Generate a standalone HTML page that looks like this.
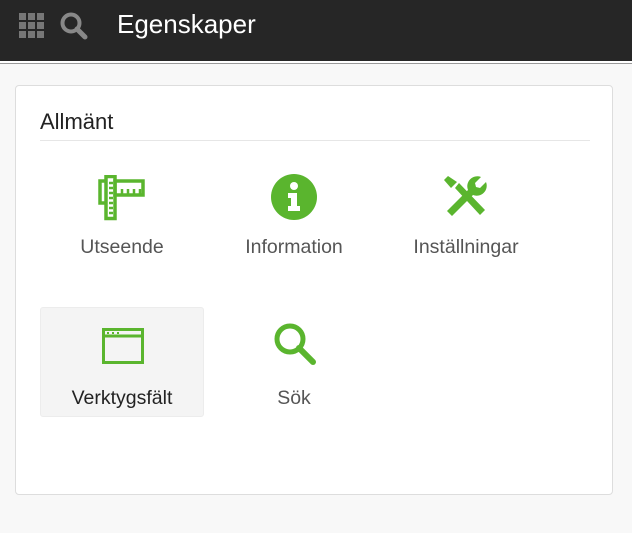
<!DOCTYPE html>
<html><head><meta charset="utf-8"><style>
body{margin:0;width:632px;height:533px;background:#f8f8f8;font-family:"Liberation Sans",sans-serif;position:relative;overflow:hidden}
.hd{position:absolute;left:0;top:0;width:632px;height:61px;background:#262626;border-bottom:2px solid #fff;box-shadow:0 1px 0 #999}
.hd .t{position:absolute;left:117px;top:9px;color:#fff;font-size:26px}
.card{position:absolute;left:15px;top:85px;width:596px;height:408px;background:#fff;border:1px solid #ddd;border-radius:4px}
.h{position:absolute;left:24px;top:23px;font-size:22px;color:#222}
.hr{position:absolute;left:24px;right:22px;top:54px;border-top:1px solid #e6e6e6}
.tile{position:absolute;width:164px;height:108px;border-radius:3px}
.tile .l{position:absolute;left:-10px;right:-10px;top:80px;text-align:center;font-size:19.5px;color:#555}
.tile svg{position:absolute}
</style></head><body>
<div class="hd">
<svg style="position:absolute;left:19px;top:13px" width="25" height="25" viewBox="0 0 25 25" fill="#777">
<rect x="0" y="0" width="7" height="7"/><rect x="9" y="0" width="7" height="7"/><rect x="18" y="0" width="7" height="7"/>
<rect x="0" y="9" width="7" height="7"/><rect x="9" y="9" width="7" height="7"/><rect x="18" y="9" width="7" height="7"/>
<rect x="0" y="18" width="7" height="7"/><rect x="9" y="18" width="7" height="7"/><rect x="18" y="18" width="7" height="7"/></svg>
<svg style="position:absolute;left:59px;top:11px" width="30" height="30" viewBox="0 0 30 30"><circle cx="12" cy="12" r="8.5" stroke="#888" stroke-width="4" fill="none"/><path d="M18 18l8 8" stroke="#888" stroke-width="5" stroke-linecap="round"/></svg>
<div class="t">Egenskaper</div>
</div>
<div class="card">
<div class="h">Allmänt</div><div class="hr"></div>
<div class="tile" style="left:24px;top:70px">
<svg style="left:58px;top:19px" width="48" height="46" viewBox="0 0 48 46" fill="none" stroke="#5ab52e" stroke-width="3.5">
<rect x="8" y="1.5" width="9" height="42"/><path d="M8 6H2v22h6"/><rect x="17" y="6" width="28" height="14"/>
<path d="M11 8h4M11 13h4M11 18h4M11 23h4M11 28h4M11 33h4M11 38h4M24 20v-6M30 20v-6M36 20v-6M42 20v-6" stroke-width="2.5"/></svg>
<div class="l">Utseende</div></div>
<div class="tile" style="left:196px;top:70px">
<svg style="left:58px;top:17px" width="48" height="48" viewBox="0 0 48 48"><circle cx="24" cy="24" r="23" fill="#5ab52e"/><circle cx="24" cy="13" r="4" fill="#fff"/><path d="M18 20h9v13h3v5H18v-5h3v-8h-3z" fill="#fff"/></svg>
<div class="l">Information</div></div>
<div class="tile" style="left:368px;top:70px">
<svg style="left:59px;top:19px" width="46" height="42" viewBox="0 0 46 42" fill="#5ab52e">
<path d="M1 5l4-4 9 6-6 6z"/><path d="M12 13l4-5 26 27-5 5z"/>
<path d="M4 36L25 15a10 10 0 0 1 13-13l-6 6 1 4 4 1 6-6a10 10 0 0 1-13 13L9 41z"/></svg>
<div class="l">Inställningar</div></div>
<div class="tile" style="left:24px;top:221px;width:162px;background:#f4f4f4;border:1px solid #ececec">
<svg style="left:61px;top:20px" width="42" height="36" viewBox="0 0 42 36" fill="none" stroke="#5ab52e" stroke-width="3"><rect x="1.5" y="1.5" width="39" height="33"/><path d="M1.5 8h39"/><path d="M5 5h2M10 5h2M15 5h2" stroke-width="2"/></svg>
<div class="l" style="color:#222;top:79px">Verktygsfält</div></div>
<div class="tile" style="left:196px;top:221px">
<svg style="left:60px;top:14px" width="46" height="46" viewBox="0 0 46 46"><circle cx="18" cy="18" r="13" stroke="#5ab52e" stroke-width="5" fill="none"/><path d="M27 27l14 14" stroke="#5ab52e" stroke-width="6" stroke-linecap="round"/></svg>
<div class="l">Sök</div></div>
</div>
</body></html>
